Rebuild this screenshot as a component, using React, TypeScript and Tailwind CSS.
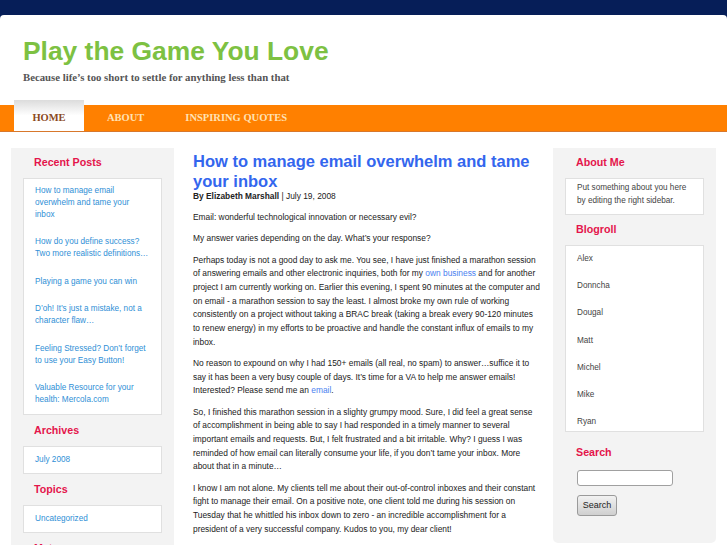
const recentPosts = [
  "How to manage email overwhelm and tame your inbox",
  "How do you define success? Two more realistic definitions…",
  "Playing a game you can win",
  "D’oh! It’s just a mistake, not a character flaw…",
  "Feeling Stressed? Don’t forget to use your Easy Button!",
  "Valuable Resource for your health: Mercola.com",
];

const blogroll = ["Alex", "Donncha", "Dougal", "Matt", "Michel", "Mike", "Ryan"];

const SideHeading = ({ children }: { children: React.ReactNode }) => (
  <h2 className="pl-[11px] text-[10.7px] leading-[16px] font-bold text-[#e4154b]">{children}</h2>
);

const Box = ({ children, className = "" }: { children: React.ReactNode; className?: string }) => (
  <div className={`mt-[8px] bg-white border border-[#e0e0e0] pl-[11px] pr-[11px] ${className}`}>{children}</div>
);

const App = () => {
  return (
    <div className="min-h-screen bg-white font-['Liberation_Sans',Arial,sans-serif] overflow-hidden">
      {/* header */}
      <div className="bg-[#061e58] pt-[15px]">
        <div className="bg-white rounded-t-[4px] h-[90px] pl-[23px] pt-[21px]">
          <h1 className="text-[26.4px] leading-[30px] font-bold text-[#7dc142]">Play the Game You Love</h1>
          <p className="mt-[4px] text-[10.75px] leading-[14px] font-bold text-[#555] font-['Liberation_Serif',serif]">
            Because life’s too short to settle for anything less than that
          </p>
        </div>
      </div>

      {/* nav */}
      <nav className="flex h-[27px] bg-[#ff8000] border-b border-[#d8782c] font-['Liberation_Serif',serif] font-bold text-[10.5px] uppercase">
        <a className="ml-[14px] -mt-[5px] h-[31px] w-[70px] flex items-center justify-center pt-[5px] bg-gradient-to-b from-[#dcdcdc] via-white to-white text-[#8b4a1c]">
          Home
        </a>
        <a className="ml-[23px] flex items-center text-[#ffe2b4]">About</a>
        <a className="ml-[41px] flex items-center text-[#ffe2b4]">Inspiring Quotes</a>
      </nav>

      <div className="flex items-start mt-[16px] pl-[11px]">
        {/* left sidebar */}
        <aside className="w-[163px] min-h-[420px] bg-[#f3f3f3] px-[12px] pt-[6px] pb-[20px]">
          <SideHeading>Recent Posts</SideHeading>
          <Box className="pt-[6px] pb-[8px]">
            {recentPosts.map((p, i) => (
              <a key={i} className={`block text-[8.2px] leading-[12px] text-[#2f8fd6] ${i > 0 ? "mt-[15.4px]" : ""}`}>
                {p}
              </a>
            ))}
          </Box>

          <div className="mt-[7px]">
            <SideHeading>Archives</SideHeading>
          </div>
          <Box className="py-[7px]">
            <a className="block text-[8.2px] leading-[12px] text-[#2f8fd6]">July 2008</a>
          </Box>

          <div className="mt-[7px]">
            <SideHeading>Topics</SideHeading>
          </div>
          <Box className="py-[7px]">
            <a className="block text-[8.2px] leading-[12px] text-[#2f8fd6]">Uncategorized</a>
          </Box>

          <div className="mt-[7px]">
            <SideHeading>Meta</SideHeading>
          </div>
          <Box className="py-[7px]">
            <a className="block text-[8.2px] leading-[12px] text-[#2f8fd6]">Log in</a>
          </Box>
        </aside>

        {/* main */}
        <main className="w-[347px] ml-[19px] pt-[3px] text-[8.4px] leading-[13.7px] text-[#222]">
          <h2 className="text-[16.5px] leading-[20px] font-bold text-[#3366ee]">
            How to manage email overwhelm and tame your inbox
          </h2>
          <p className="-mt-[1px]">
            <b>By Elizabeth Marshall</b> | July 19, 2008
          </p>
          <p className="mt-[7.5px]">Email: wonderful technological innovation or necessary evil?</p>
          <p className="mt-[7.5px]">My answer varies depending on the day. What’s your response?</p>
          <p className="mt-[7.5px]">
            Perhaps today is not a good day to ask me. You see, I have just finished a marathon session of answering
            emails and other electronic inquiries, both for my <a className="text-[#4a7ff0]">own business</a> and for
            another project I am currently working on. Earlier this evening, I spent 90 minutes at the computer and on
            email - a marathon session to say the least. I almost broke my own rule of working consistently on a
            project without taking a BRAC break (taking a break every 90-120 minutes to renew energy) in my efforts to
            be proactive and handle the constant influx of emails to my inbox.
          </p>
          <p className="mt-[7.5px]">
            No reason to expound on why I had 150+ emails (all real, no spam) to answer…suffice it to say it has been a
            very busy couple of days. It’s time for a VA to help me answer emails! Interested? Please send me an{" "}
            <a className="text-[#4a7ff0]">email</a>.
          </p>
          <p className="mt-[7.5px]">
            So, I finished this marathon session in a slighty grumpy mood. Sure, I did feel a great sense of
            accomplishment in being able to say I had responded in a timely manner to several important emails and
            requests. But, I felt frustrated and a bit irritable. Why? I guess I was reminded of how email can literally
            consume your life, if you don’t tame your inbox. More about that in a minute…
          </p>
          <p className="mt-[7.5px]">
            I know I am not alone. My clients tell me about their out-of-control inboxes and their constant fight to
            manage their email. On a positive note, one client told me during his session on Tuesday that he whittled
            his inbox down to zero - an incredible accomplishment for a president of a very successful company. Kudos to
            you, my dear client!
          </p>
          <p className="mt-[7.5px]">So how do you tame your inbox? Here are a few tips that work for me.</p>
        </main>

        {/* right sidebar */}
        <aside className="w-[163px] ml-[13px] bg-[#f3f3f3] rounded-b-[5px] px-[12px] pt-[6px] pb-[27px]">
          <SideHeading>About Me</SideHeading>
          <Box className="pt-[3px] pb-[7px]">
            <p className="text-[8.2px] leading-[12.5px] text-[#444]">
              Put something about you here by editing the right sidebar.
            </p>
          </Box>

          <div className="mt-[6px]">
            <SideHeading>Blogroll</SideHeading>
          </div>
          <Box className="pt-[7px] pb-[3px]">
            {blogroll.map((name, i) => (
              <a key={name} className={`block text-[8.2px] leading-[12px] text-[#444] ${i > 0 ? "mt-[15.2px]" : ""}`}>
                {name}
              </a>
            ))}
          </Box>

          <div className="mt-[12px]">
            <SideHeading>Search</SideHeading>
          </div>
          <div className="pl-[12px] mt-[10px]">
            <input className="block w-[96px] h-[16px] bg-white border border-[#a0a0a0] rounded-[3px]" />
            <button className="mt-[9px] block w-[40px] h-[21px] text-[9px] text-[#222] border border-[#9a9a9a] rounded-[3px] bg-gradient-to-b from-[#f2f2f2] to-[#cfcfcf]">
              Search
            </button>
          </div>
        </aside>
      </div>
    </div>
  );
};

export default App;
